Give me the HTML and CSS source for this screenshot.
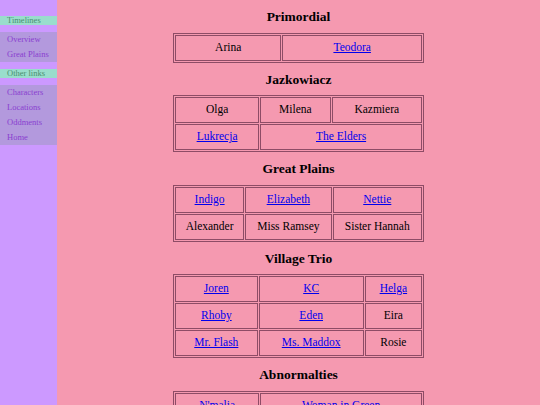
FILE: index.html
```html
<!DOCTYPE html>
<html>
<head>
<meta charset="utf-8">
<link rel="stylesheet" href="styles.css">
</head>
<body>
<div class="sidebar">
  <div class="side-head">Timelines</div>
  <div class="side-list">
    <a href="#">Overview</a>
    <a href="#">Great Plains</a>
  </div>
  <div class="side-head">Other links</div>
  <div class="side-list">
    <a href="#">Characters</a>
    <a href="#">Locations</a>
    <a href="#">Oddments</a>
    <a href="#">Home</a>
  </div>
</div>
<div class="main">
  <h3>Primordial</h3>
  <table>
    <tr><td>Arina</td><td><a href="#">Teodora</a></td></tr>
  </table>
  <h3>Jazkowiacz</h3>
  <table>
    <tr><td>Olga</td><td>Milena</td><td>Kazmiera</td></tr>
    <tr><td><a href="#">Lukrecja</a></td><td colspan="2"><a href="#">The Elders</a></td></tr>
  </table>
  <h3>Great Plains</h3>
  <table>
    <tr><td><a href="#">Indigo</a></td><td><a href="#">Elizabeth</a></td><td><a href="#">Nettie</a></td></tr>
    <tr><td>Alexander</td><td>Miss Ramsey</td><td>Sister Hannah</td></tr>
  </table>
  <h3>Village Trio</h3>
  <table>
    <tr><td><a href="#">Joren</a></td><td><a href="#">KC</a></td><td><a href="#">Helga</a></td></tr>
    <tr><td><a href="#">Rhoby</a></td><td><a href="#">Eden</a></td><td>Eira</td></tr>
    <tr><td><a href="#">Mr. Flash</a></td><td><a href="#">Ms. Maddox</a></td><td>Rosie</td></tr>
  </table>
  <h3>Abnormalties</h3>
  <table>
    <tr><td><a href="#">N'malia</a></td><td><a href="#">Woman in Green</a></td></tr>
  </table>
</div>
</body>
</html>
```
FILE: styles.css
```css
html, body {
  margin: 0;
  padding: 0;
}
body {
  display: flex;
  align-items: stretch;
  font-family: "Liberation Serif", "Times New Roman", serif;
  min-height: 405px;
  overflow: hidden;
}
.sidebar {
  width: 57px;
  flex: 0 0 57px;
  background: #cc99ff;
  padding-top: 16px;
  min-height: 405px;
}
.side-head {
  height: 9px;
  line-height: 9px;
  background: #99ddcc;
  color: #4a9070;
  font-size: 8.5px;
  padding-left: 7px;
  margin-bottom: 7px;
  white-space: nowrap;
}
.side-list {
  background: #b399dd;
  padding-left: 7px;
  margin-bottom: 7px;
  font-size: 8.5px;
  line-height: 15px;
}
.side-list a {
  display: block;
  color: #8a3fd0;
  text-decoration: none;
  white-space: nowrap;
}
.main {
  flex: 1;
  background: #f599b0;
  text-align: center;
  min-height: 405px;
}
h3 {
  font-size: 13.5px;
  line-height: 15.5px;
  margin: 9px 0 8px;
  font-weight: bold;
}
table {
  margin: 0 auto 2px;
  width: 251px;
  border: 1px solid #8e4c66;
  border-spacing: 1px;
  font-size: 11.5px;
}
td {
  border: 1px solid #8e4c66;
  padding: 5px 4px 6px;
  line-height: 13px;
  text-align: center;
  white-space: nowrap;
}
td a {
  color: #0000ee;
}
```
